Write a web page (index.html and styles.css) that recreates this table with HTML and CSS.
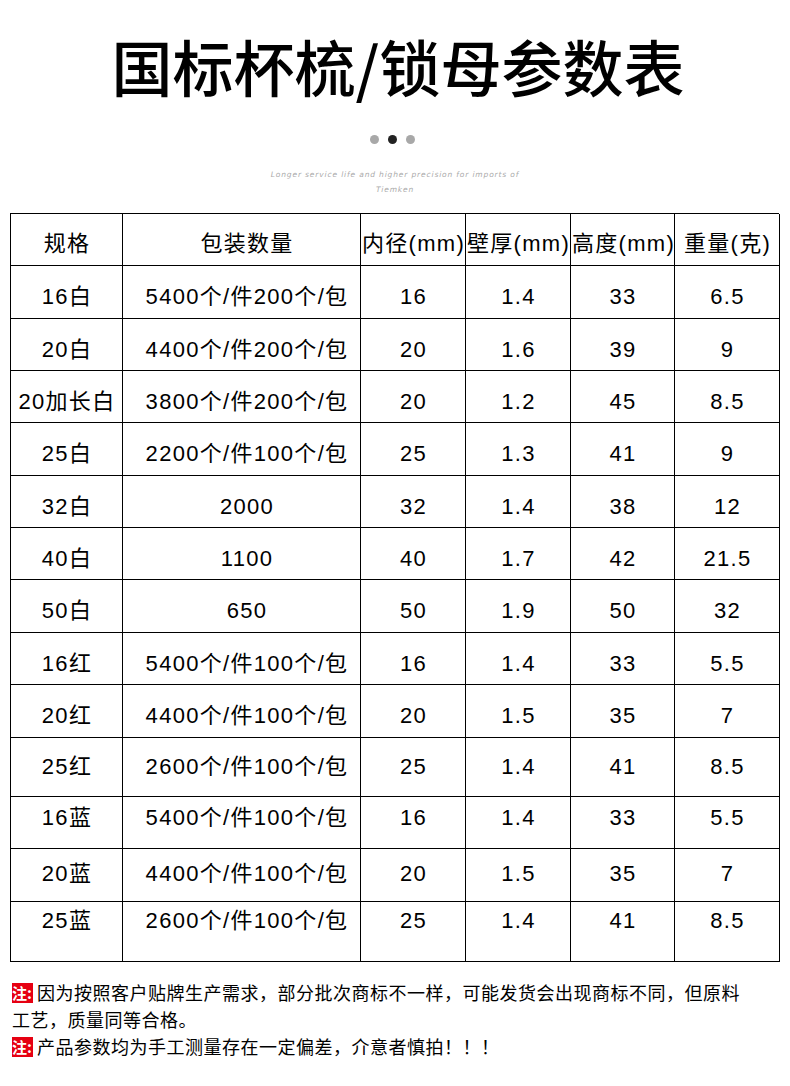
FILE: index.html
```html
<!DOCTYPE html>
<html lang="zh-CN">
<head>
<meta charset="utf-8">
<link rel="stylesheet" href="styles.css">
</head>
<body>
<h1 class="title">国标杯梳/锁母参数表</h1>
<div class="dots"><span class="dot"></span><span class="dot dark"></span><span class="dot"></span></div>
<p class="sub">Longer service life and higher precision for imports of<br>Tiemken</p>
<div class="table">
  <div class="row head h52"><div class="c">规格</div><div class="c c2">包装数量</div><div class="c">内径(mm)</div><div class="c">壁厚(mm)</div><div class="c">高度(mm)</div><div class="c">重量(克)</div></div>
  <div class="row h53"><div class="c">16白</div><div class="c c2">5400个/件200个/包</div><div class="c">16</div><div class="c">1.4</div><div class="c">33</div><div class="c">6.5</div></div>
  <div class="row h52"><div class="c">20白</div><div class="c c2">4400个/件200个/包</div><div class="c">20</div><div class="c">1.6</div><div class="c">39</div><div class="c">9</div></div>
  <div class="row h52"><div class="c">20加长白</div><div class="c c2">3800个/件200个/包</div><div class="c">20</div><div class="c">1.2</div><div class="c">45</div><div class="c">8.5</div></div>
  <div class="row h52"><div class="c">25白</div><div class="c c2">2200个/件100个/包</div><div class="c">25</div><div class="c">1.3</div><div class="c">41</div><div class="c">9</div></div>
  <div class="row h52"><div class="c">32白</div><div class="c c2">2000</div><div class="c">32</div><div class="c">1.4</div><div class="c">38</div><div class="c">12</div></div>
  <div class="row h52"><div class="c">40白</div><div class="c c2">1100</div><div class="c">40</div><div class="c">1.7</div><div class="c">42</div><div class="c">21.5</div></div>
  <div class="row h53"><div class="c">50白</div><div class="c c2">650</div><div class="c">50</div><div class="c">1.9</div><div class="c">50</div><div class="c">32</div></div>
  <div class="row h52"><div class="c">16红</div><div class="c c2">5400个/件100个/包</div><div class="c">16</div><div class="c">1.4</div><div class="c">33</div><div class="c">5.5</div></div>
  <div class="row h52"><div class="c">20红</div><div class="c c2">4400个/件100个/包</div><div class="c">20</div><div class="c">1.5</div><div class="c">35</div><div class="c">7</div></div>
  <div class="row r60a"><div class="c">25红</div><div class="c c2">2600个/件100个/包</div><div class="c">25</div><div class="c">1.4</div><div class="c">41</div><div class="c">8.5</div></div>
  <div class="row r52b"><div class="c">16蓝</div><div class="c c2">5400个/件100个/包</div><div class="c">16</div><div class="c">1.4</div><div class="c">33</div><div class="c">5.5</div></div>
  <div class="row r53c"><div class="c">20蓝</div><div class="c c2">4400个/件100个/包</div><div class="c">20</div><div class="c">1.5</div><div class="c">35</div><div class="c">7</div></div>
  <div class="row r60d"><div class="c">25蓝</div><div class="c c2">2600个/件100个/包</div><div class="c">25</div><div class="c">1.4</div><div class="c">41</div><div class="c">8.5</div></div>
</div>
<div class="notes">
  <p class="note"><span class="tag">注:</span>因为按照客户贴牌生产需求，部分批次商标不一样，可能发货会出现商标不同，但原料工艺，质量同等合格。</p>
  <p class="note"><span class="tag">注:</span>产品参数均为手工测量存在一定偏差，介意者慎拍！！！</p>
</div>
</body>
</html>
```
FILE: styles.css
```css
html, body {
  margin: 0;
  padding: 0;
  background: #fff;
  color: #000;
  font-family: "Liberation Sans", "Noto Sans CJK SC", sans-serif;
}
body { width: 790px; }

.title {
  margin: 0;
  padding-top: 35px;
  padding-left: 6px;
  height: 62px;
  line-height: 62px;
  font-size: 61px;
  font-weight: 500;
  text-align: center;
  font-family: "Noto Sans CJK SC", sans-serif;
}

.dots {
  display: flex;
  justify-content: center;
  gap: 9px;
  margin-top: 38px;
  height: 9px;
  padding-right: 6px;
}
.dot {
  width: 9px;
  height: 9px;
  border-radius: 50%;
  background: #a8a8a8;
}
.dot.dark { background: #222; }

.sub {
  margin: 23px 0 0;
  text-align: center;
  font-family: "DejaVu Sans", sans-serif;
  font-style: italic;
  font-size: 7.5px;
  line-height: 15px;
  letter-spacing: 0.85px;
  color: #aaa;
}

.table {
  margin: 16px 0 0 10px;
  width: 769px;
  border-left: 1.3px solid #000;
  border-top: 1.3px solid #000;
  box-sizing: border-box;
  font-size: 22px;
  letter-spacing: 1.3px;
}
.row {
  display: grid;
  grid-template-columns: 112px 238px 105px 105px 104px 105px;
  box-sizing: border-box;
}
.c {
  border-right: 1.3px solid #000;
  border-bottom: 1.3px solid #000;
  text-align: center;
  line-height: 24px;
  padding-top: 19px;
  box-sizing: border-box;
  white-space: nowrap;
  text-indent: 1px;
}
.c2 { padding-left: 10px; }
.head .c { padding-top: 18px; }
.h52 { height: 52.3px; }
.h53 { height: 52.6px; }
.r60a { height: 59.7px; }
.r60a .c { padding-top: 17px; }
.r52b { height: 51.6px; }
.r52b .c { padding-top: 9px; }
.r53c { height: 53px; }
.r53c .c { padding-top: 13px; }
.r60d { height: 60px; }
.r60d .c { padding-top: 7px; }

.notes {
  margin-top: 17px;
  padding-left: 12px;
  width: 738px;
}
.note {
  margin: 0;
  font-family: "Noto Sans CJK SC", sans-serif;
  font-size: 18px;
  line-height: 27px;
  letter-spacing: 0.5px;
}
.tag {
  display: inline-block;
  background: #e60012;
  color: #fff;
  font-weight: 700;
  font-size: 15px;
  line-height: 20px;
  height: 20px;
  letter-spacing: 0;
  padding-right: 1px;
  margin-right: 4px;
  vertical-align: 1px;
  white-space: nowrap;
}
```
